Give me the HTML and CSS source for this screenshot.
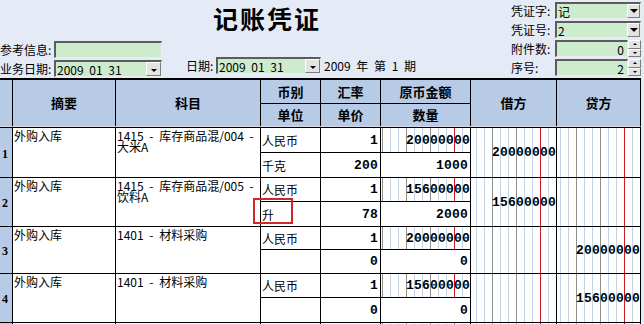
FILE: index.html
```html
<!DOCTYPE html>
<html lang="zh-CN">
<head>
<meta charset="utf-8">
<title>记账凭证</title>
<link rel="stylesheet" href="styles.css">
</head>
<body>
<div class="page">
  <header class="head">
    <div class="head-left">
      <div class="field">
        <span class="lbl lbl-l">参考信息:</span>
        <span class="inp inp-l"></span>
      </div>
      <div class="field">
        <span class="lbl lbl-l">业务日期:</span>
        <span class="inp inp-l combo"><span class="val">2009 01 31</span><span class="dd dd-sm"><i class="tri tri-sm"></i></span></span>
      </div>
    </div>
    <div class="head-mid">
      <h1 class="title">记账凭证</h1>
      <div class="field date-row">
        <span class="lbl lbl-d">日期:</span>
        <span class="inp inp-d combo"><span class="val">2009 01 31</span><span class="dd dd-sm"><i class="tri tri-sm"></i></span></span>
        <span class="period">2009 年 第 1 期</span>
      </div>
    </div>
    <div class="head-right">
      <div class="field"><span class="lbl lbl-r">凭证字:</span><span class="inp inp-r combo"><span class="val">记</span><span class="dd"><i class="tri"></i></span></span></div>
      <div class="field"><span class="lbl lbl-r">凭证号:</span><span class="inp inp-r combo"><span class="val">2</span><span class="dd"><i class="tri"></i></span></span></div>
      <div class="field"><span class="lbl lbl-r">附件数:</span><span class="inp inp-r num"><span class="val">0</span></span><span class="spin"><span class="sb"><i class="tri tri-up"></i></span><span class="sb"><i class="tri tri-dn"></i></span></span></div>
      <div class="field"><span class="lbl lbl-r">序号:</span><span class="inp inp-r num"><span class="val">2</span></span><span class="spin"><span class="sb"><i class="tri tri-up"></i></span><span class="sb"><i class="tri tri-dn"></i></span></span></div>
    </div>
  </header>

  <section class="voucher">
    <div class="grid vhead">
      <div class="hc span2"></div>
      <div class="hc span2">摘要</div>
      <div class="hc span2">科目</div>
      <div class="hc">币别</div>
      <div class="hc">汇率</div>
      <div class="hc">原币金额</div>
      <div class="hc span2">借方</div>
      <div class="hc span2">贷方</div>
      <div class="hc">单位</div>
      <div class="hc">单价</div>
      <div class="hc">数量</div>
    </div>

    <div class="grid vbody">
      <!-- 1 -->
      <div class="rn span2">1</div>
      <div class="c txt span2">外购入库</div>
      <div class="c txt span2">1415 - 库存商品混/004 - 大米A</div>
      <div class="c sub">人民币</div>
      <div class="c sub n">1</div>
      <div class="c sub n ledger">20000000</div>
      <div class="c sub n ledger span2">20000000</div>
      <div class="c sub n ledger span2"></div>
      <div class="c sub">千克</div>
      <div class="c sub n">200</div>
      <div class="c sub n">1000</div>
      <!-- 2 -->
      <div class="rn span2">2</div>
      <div class="c txt span2">外购入库</div>
      <div class="c txt span2">1415 - 库存商品混/005 - 饮料A</div>
      <div class="c sub">人民币</div>
      <div class="c sub n">1</div>
      <div class="c sub n ledger">15600000</div>
      <div class="c sub n ledger span2">15600000</div>
      <div class="c sub n ledger span2"></div>
      <div class="c sub marked">升<span class="mark"></span></div>
      <div class="c sub n">78</div>
      <div class="c sub n">2000</div>
      <!-- 3 -->
      <div class="rn span2">3</div>
      <div class="c txt span2">外购入库</div>
      <div class="c txt span2">1401 - 材料采购</div>
      <div class="c sub">人民币</div>
      <div class="c sub n">1</div>
      <div class="c sub n ledger">20000000</div>
      <div class="c sub n ledger span2"></div>
      <div class="c sub n ledger span2">20000000</div>
      <div class="c sub"></div>
      <div class="c sub n">0</div>
      <div class="c sub n">0</div>
      <!-- 4 -->
      <div class="rn span2">4</div>
      <div class="c txt span2">外购入库</div>
      <div class="c txt span2">1401 - 材料采购</div>
      <div class="c sub">人民币</div>
      <div class="c sub n">1</div>
      <div class="c sub n ledger">15600000</div>
      <div class="c sub n ledger span2"></div>
      <div class="c sub n ledger span2">15600000</div>
      <div class="c sub"></div>
      <div class="c sub n">0</div>
      <div class="c sub n">0</div>
      <!-- 5 (partially visible) -->
      <div class="rn span2"></div>
      <div class="c txt span2"></div>
      <div class="c txt span2"></div>
      <div class="c sub"></div>
      <div class="c sub n"></div>
      <div class="c sub n ledger"></div>
      <div class="c sub n ledger span2"></div>
      <div class="c sub n ledger span2"></div>
      <div class="c sub"></div>
      <div class="c sub n"></div>
      <div class="c sub n"></div>
    </div>
  </section>
</div>
</body>
</html>
```

FILE: styles.css
```css
* { box-sizing: border-box; }

html, body {
  margin: 0;
  padding: 0;
}

body {
  width: 644px;
  height: 324px;
  overflow: hidden;
  background: #e5ebf6;
  font-family: "Noto Sans CJK SC", "Noto Sans", sans-serif;
  font-size: 12px;
  color: #000;
}

.page { position: relative; }

/* ---------- top form ---------- */
.head {
  display: flex;
  height: 78px;
}

.field {
  display: flex;
  align-items: center;
  height: 17px;
}

.lbl {
  white-space: nowrap;
  line-height: 17px;
}

.head-left {
  width: 162px;
  padding-top: 41px;
  display: flex;
  flex-direction: column;
  gap: 2px;
}

.lbl-l { width: 54px; }
.inp-l { width: 108px; }

.head-mid {
  width: 349px;
  display: flex;
  flex-direction: column;
  padding-bottom: 4px;
}

.title {
  margin: 0 0 0 51px;
  font-size: 25px;
  line-height: 37px;
  font-weight: 700;
  letter-spacing: 2px;
  white-space: nowrap;
}

.date-row {
  margin-top: auto;
  padding-left: 24px;
}

.lbl-d { width: 30px; }
.inp-d { width: 105px; }

.period {
  margin-left: 3px;
  word-spacing: 3px;
  white-space: nowrap;
}

.head-right {
  width: 130px;
  padding-top: 2px;
  display: flex;
  flex-direction: column;
  gap: 2px;
}

.lbl-r { width: 44px; }
.inp-r { flex: 1; }

.inp {
  height: 17px;
  background: #cdebcd;
  border-style: solid;
  border-width: 2px 1px 1px 2px;
  border-color: #5c5c5c #ececec #ececec #5c5c5c;
  display: flex;
  align-items: center;
  padding-left: 1px;
}

.val {
  line-height: 13px;
  white-space: nowrap;
  word-spacing: 3px;
}

.num {
  justify-content: flex-end;
  padding-right: 3px;
}

.dd {
  margin-left: auto;
  width: 13px;
  height: 14px;
  background: #e3e3e3;
  border: 1px solid;
  border-color: #ffffff #7c7c7c #7c7c7c #ffffff;
  display: flex;
  align-items: center;
  justify-content: center;
}

.dd-sm { width: 15px; }

.tri {
  display: block;
  width: 0;
  height: 0;
  border-left: 4px solid transparent;
  border-right: 4px solid transparent;
  border-top: 4px solid #000;
}

.tri-sm {
  border-left-width: 3px;
  border-right-width: 3px;
  border-top-width: 3px;
  margin-top: 3px;
}

.spin {
  width: 13px;
  height: 17px;
  display: flex;
  flex-direction: column;
}

.sb {
  flex: 1;
  background: #e3e3e3;
  border: 1px solid;
  border-color: #ffffff #7c7c7c #7c7c7c #ffffff;
  display: flex;
  align-items: center;
  justify-content: center;
}

.tri-up {
  border-left-width: 2px;
  border-right-width: 2px;
  border-top: 0;
  border-bottom: 2px solid #000;
}

.tri-dn {
  border-left-width: 2px;
  border-right-width: 2px;
  border-top-width: 2px;
}

/* ---------- voucher table ---------- */
.grid {
  display: grid;
  grid-template-columns: 12px 102px 144px 59px 59px 89px 85px 83px;
  gap: 1px;
  background: #000;
  width: 641px;
  border-right: 1px solid #000;
}

.vhead {
  grid-template-rows: 23px 22px;
  border-top: 2px solid #000;
  border-bottom: 1px solid #d3d9e4;
}

.hc {
  background: #b7cbe6;
  display: flex;
  align-items: center;
  justify-content: center;
  font-weight: 700;
  font-size: 13px;
  line-height: 14px;
}

.span2 { grid-row: span 2; }

.vbody {
  grid-template-rows: 24px 24px 23px 24px 22px 23px 23px 24px 24px;
  border-top: 1px solid #000;
}

.rn {
  background: #b7cbe6;
  display: flex;
  align-items: center;
  padding: 3px 0 0 2px;
  font-family: "Liberation Serif", serif;
  font-weight: 700;
  font-size: 12px;
}

.c { background: #fff; }

.txt {
  padding: 2px 1px 0;
  line-height: 11px;
  word-spacing: 3px;
}

.sub {
  display: flex;
  align-items: center;
  padding: 0 1px;
  white-space: nowrap;
}

.n {
  justify-content: flex-end;
  padding-right: 2px;
  font-family: "Liberation Mono", monospace;
  font-weight: 700;
  font-size: 13px;
  letter-spacing: 0.2px;
}

.ledger {
  padding-right: 0;
  background-color: #fff;
  background-image:
    linear-gradient(#c81c24, #c81c24),
    linear-gradient(to right, #8e8e8e 1px, transparent 1px),
    linear-gradient(to right, #c3d3e3 1px, transparent 1px);
  background-size: 1px 100%, 24px 100%, 8px 100%;
  background-position: right 15px top, right 16px top, right top;
  background-repeat: no-repeat, repeat-x, repeat-x;
}

.marked { position: relative; }

.mark {
  position: absolute;
  left: -8px;
  top: -4px;
  width: 40px;
  height: 26px;
  border: 2px solid #d02828;
}
```
